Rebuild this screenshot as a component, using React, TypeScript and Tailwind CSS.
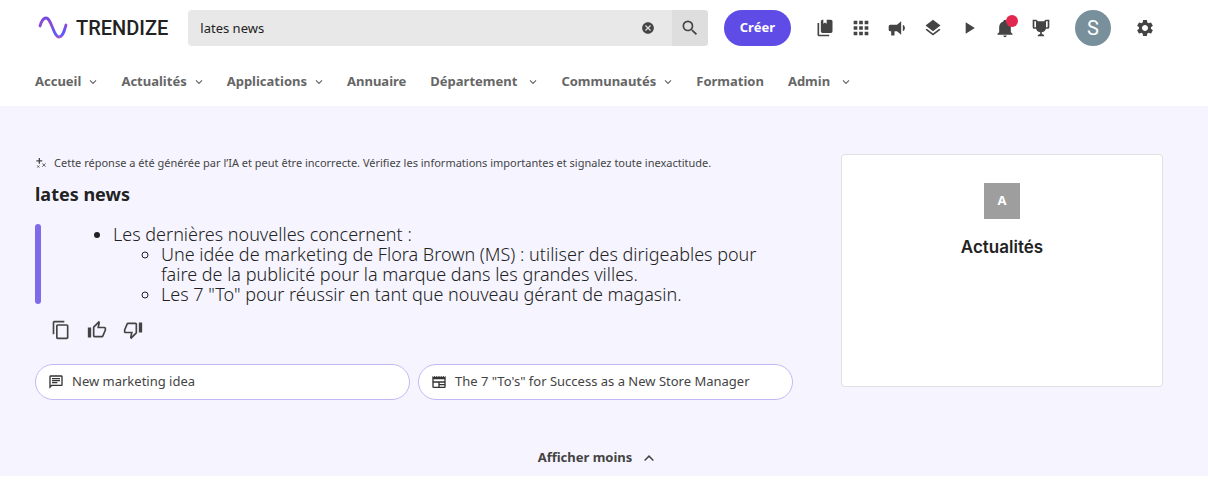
import type { ReactNode } from "react";
import { MdApps, MdContentCopy, MdLayers, MdOutlineChat, MdPlayArrow, MdSearch, MdSettings } from "react-icons/md";

function Icon({ d, className = "size-5" }: { d: string; className?: string }) {
  return (
    <svg viewBox="0 0 24 24" fill="currentColor" className={className} aria-hidden="true">
      <path d={d} />
    </svg>
  );
}

const paths = {
  books:
    "M19,18H9A2,2 0 0,1 7,16V4A2,2 0 0,1 9,2H10V7L12,5.5L14,7V2H19A2,2 0 0,1 21,4V16A2,2 0 0,1 19,18M17,20V22H5A2,2 0 0,1 3,20V6H5V20H17Z",
  bullhorn:
    "M12,8H4A2,2 0 0,0 2,10V14A2,2 0 0,0 4,16H5V20A1,1 0 0,0 6,21H8A1,1 0 0,0 9,20V16H12L17,20V4L12,8M21.5,12C21.5,13.71 20.54,15.26 19,16V8C20.53,8.75 21.5,10.3 21.5,12Z",
  bell: "M21,19V20H3V19L5,17V11C5,7.9 7.03,5.17 10,4.29C10,4.19 10,4.1 10,4A2,2 0 0,1 12,2A2,2 0 0,1 14,4C14,4.1 14,4.19 14,4.29C16.97,5.17 19,7.9 19,11V17L21,19M14,21A2,2 0 0,1 12,23A2,2 0 0,1 10,21",
  trophy:
    "M18 2C17.1 2 16 3 16 4H8C8 3 6.9 2 6 2H2V11C2 12 3 13 4 13H6.2C6.6 15 7.9 16.7 11 17V19.08C8 19.54 8 22 8 22H16C16 22 16 19.54 13 19.08V17C16.1 16.7 17.4 15 17.8 13H20C21 13 22 12 22 11V2H18M6 11H4V4H6V11M20 11H18V4H20V11Z",
  thumb:
    "M5,9V21H1V9H5M9,21A2,2 0 0,1 7,19V9C7,8.45 7.22,7.95 7.59,7.59L14.17,1L15.23,2.06C15.5,2.33 15.67,2.7 15.67,3.11L15.64,3.43L14.69,8H21C22.11,8 23,8.9 23,10V12C23,12.26 22.95,12.5 22.86,12.73L19.84,19.78C19.54,20.5 18.83,21 18,21H9M9,19H18.03L21,12V10H12.21L13.34,4.68L9,9.03V19Z",
  clear:
    "M12,2C17.53,2 22,6.47 22,12C22,17.53 17.53,22 12,22C6.47,22 2,17.53 2,12C2,6.47 6.47,2 12,2M15.59,7L12,10.59L8.41,7L7,8.41L10.59,12L7,15.59L8.41,17L12,13.41L15.59,17L17,15.59L13.41,12L17,8.41L15.59,7Z",
  newspaper:
    "M20,11H4V8H20M20,15H13V13H20M20,19H13V17H20M11,19H4V13H11M20.33,4.67L18.67,3L17,4.67L15.33,3L13.67,4.67L12,3L10.33,4.67L8.67,3L7,4.67L5.33,3L3.67,4.67L2,3V19A2,2 0 0,0 4,21H20A2,2 0 0,0 22,19V3L20.33,4.67Z",
};

function Chevron({ up = false, className }: { up?: boolean; className: string }) {
  return (
    <svg viewBox="0 0 8 8" fill="none" stroke="currentColor" strokeWidth="1.2" className={className} aria-hidden="true">
      <path d={up ? "M0.5 6L4 2.5L7.5 6" : "M1 2.4L4 5.4L7 2.4"} />
    </svg>
  );
}

function Logo() {
  return (
    <a href="#" className="flex shrink-0 items-center gap-2 text-[#222]">
      <svg viewBox="0 0 30 24" fill="none" className="h-6 w-[30px]" aria-hidden="true">
        <defs>
          <linearGradient id="wave" x1="0" y1="0" x2="0" y2="23" gradientUnits="userSpaceOnUse">
            <stop offset="0" stopColor="#6a4be0" />
            <stop offset="0.35" stopColor="#9548d2" />
            <stop offset="0.6" stopColor="#6a52f0" />
            <stop offset="0.8" stopColor="#5a5cff" />
            <stop offset="1" stopColor="#d04bb5" />
          </linearGradient>
        </defs>
        <path
          d="M2 10C3.5 5 5 2 8 2C13.5 2 15.5 21 21 21C25 21 26.5 14 28 9"
          stroke="url(#wave)"
          strokeWidth="2.8"
          strokeLinecap="round"
        />
      </svg>
      <span className="font-[Roboto,sans-serif] text-[20px] leading-6 font-medium">TRENDIZE</span>
    </a>
  );
}

function ToolButton({ label, children }: { label: string; children: ReactNode }) {
  return (
    <button type="button" aria-label={label} className="relative grid size-9 place-items-center text-[#444]">
      {children}
    </button>
  );
}

const nav = [
  { label: "Accueil", menu: true },
  { label: "Actualités", menu: true },
  { label: "Applications", menu: true },
  { label: "Annuaire" },
  { label: "Département", menu: true, wide: true },
  { label: "Communautés", menu: true },
  { label: "Formation" },
  { label: "Admin", menu: true, wide: true },
];

export default function App() {
  return (
    <div className="bg-white font-['Noto_Sans',sans-serif] text-[#222]">
      <header className="pb-3">
        <div className="flex items-center pt-[10px] pr-[45px] pl-[38px]">
          <Logo />
          <form role="search" className="ml-5 flex h-9 flex-1 items-center overflow-hidden rounded bg-[#e8e8e8]">
            <input
              aria-label="Rechercher"
              defaultValue="lates news"
              className="h-full min-w-0 flex-1 bg-transparent pl-3 text-[13px] outline-none"
            />
            <button type="reset" aria-label="Effacer" className="grid h-9 w-12 place-items-center text-[#444]">
              <Icon d={paths.clear} className="size-[14px]" />
            </button>
            <button type="submit" aria-label="Lancer la recherche" className="grid h-9 w-9 place-items-center bg-[#dedede] text-[#444]">
              <MdSearch className="size-5" />
            </button>
          </form>
          <button type="button" className="ml-4 h-9 rounded-full bg-[#5f4be6] px-4 text-[13px] font-bold text-white">
            Créer
          </button>
          <div className="ml-4 flex items-center">
            <ToolButton label="Favoris"><Icon d={paths.books} /></ToolButton>
            <ToolButton label="Applications"><MdApps className="size-[22px]" /></ToolButton>
            <ToolButton label="Annonces"><Icon d={paths.bullhorn} /></ToolButton>
            <ToolButton label="Espaces"><MdLayers className="size-5" /></ToolButton>
            <ToolButton label="Vidéos"><MdPlayArrow className="size-5" /></ToolButton>
            <ToolButton label="Notifications">
              <Icon d={paths.bell} />
              <span className="absolute top-[5px] right-[5px] size-3 rounded-full bg-[#e2264d]" />
            </ToolButton>
            <ToolButton label="Classement"><Icon d={paths.trophy} /></ToolButton>
          </div>
          <button type="button" aria-label="Profil" className="ml-4 size-9 rounded-full bg-[#78909c] font-[Roboto,sans-serif] text-xl text-white">
            S
          </button>
          <div className="ml-4">
            <ToolButton label="Paramètres"><MdSettings className="size-5" /></ToolButton>
          </div>
        </div>
        <nav className="mt-6 flex h-6 items-center gap-6 px-[35px] text-[13px] font-bold text-[#666]">
          {nav.map((item) => (
            <a key={item.label} href="#" className={item.wide ? "flex items-center gap-3" : "flex items-center gap-2"}>
              {item.label}
              {item.menu && <Chevron className="size-2" />}
            </a>
          ))}
        </nav>
      </header>

      <main className="bg-[#f6f5ff] px-[35px] pt-12 pb-2">
        <div className="flex items-start gap-12 pr-[10px]">
          <section className="min-w-0 flex-1">
            <p className="flex h-[18px] items-center gap-2 text-[11px] text-[#444]">
              <svg viewBox="0 0 12 12" stroke="currentColor" fill="none" className="ml-px size-[10px] shrink-0" aria-hidden="true">
                <path d="M4 0V7M0.5 3.5H7.5" strokeWidth="1.5" />
                <path d="M7.5 6.5L11.5 10.5M11.5 6.5L7.5 10.5M1.5 9L4 11.5M4 9L1.5 11.5" />
              </svg>
              Cette réponse a été générée par l’IA et peut être incorrecte. Vérifiez les informations importantes et signalez toute inexactitude.
            </p>
            <h1 className="mt-2 text-lg leading-7 font-bold">lates news</h1>
            <div className="mt-4 flex">
              <div className="w-[6px] shrink-0 rounded-full bg-[#7f6bea]" />
              <ul className="ml-8 list-disc pl-10 text-lg leading-5 font-light">
                <li>
                  Les dernières nouvelles concernent :
                  <ul className="list-[circle] pr-3 pl-12">
                    <li>
                      Une idée de marketing de Flora Brown (MS) : utiliser des dirigeables pour faire de la publicité pour la marque dans les grandes villes.
                    </li>
                    <li>Les 7 "To" pour réussir en tant que nouveau gérant de magasin.</li>
                  </ul>
                </li>
              </ul>
            </div>
            <div className="mt-2 flex pl-2">
              <ToolButton label="Copier"><MdContentCopy className="size-5" /></ToolButton>
              <ToolButton label="Utile"><Icon d={paths.thumb} /></ToolButton>
              <ToolButton label="Pas utile"><Icon d={paths.thumb} className="size-5 rotate-180" /></ToolButton>
            </div>
            <div className="mt-4 grid grid-cols-2 gap-2 text-[13px] text-[#444]">
              <a href="#" className="flex h-9 items-center gap-2 rounded-full border border-[#c2b8f6] bg-white px-3">
                <MdOutlineChat className="size-4 shrink-0 text-[#333]" />
                New marketing idea
              </a>
              <a href="#" className="flex h-9 items-center gap-2 rounded-full border border-[#c2b8f6] bg-white px-3">
                <Icon d={paths.newspaper} className="size-4 shrink-0 text-[#333]" />
                The 7 "To's" for Success as a New Store Manager
              </a>
            </div>
          </section>
          <aside className="flex min-h-[233px] w-[322px] shrink-0 flex-col items-center rounded border border-[#e0e0e0] bg-white pt-7">
            <div className="grid size-9 place-items-center bg-[#9e9e9e] text-[13px] font-bold text-white">A</div>
            <h2 className="mt-4 font-[Inter,sans-serif] text-[17px] leading-6 font-semibold">Actualités</h2>
          </aside>
        </div>
        <div className="mt-12 flex justify-center pr-4">
          <button type="button" className="flex h-5 items-center gap-3 text-[13px] font-bold text-[#444]">
            Afficher moins
            <Chevron up className="size-[10px]" />
          </button>
        </div>
      </main>
    </div>
  );
}
